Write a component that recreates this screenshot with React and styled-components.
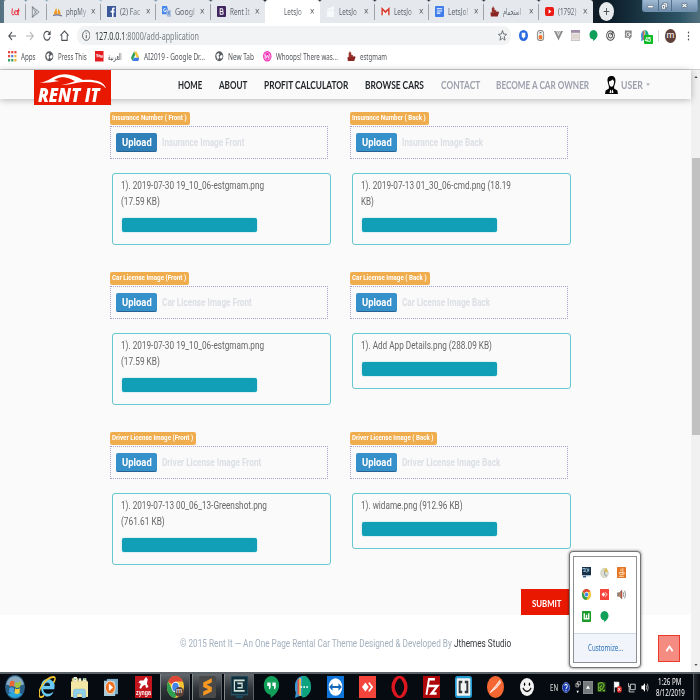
import React, { useLayoutEffect, useRef, useState } from "react";
import styled, { createGlobalStyle, css } from "styled-components";

const Global = createGlobalStyle`
  * { box-sizing: border-box; }
  body { margin: 0; width: 700px; height: 700px; overflow: hidden; background: #fff; font-family: Roboto, "Liberation Sans", sans-serif; }
  svg { display: block; flex: none; }
`;

/* ---------- condensed text ---------- */
const FitBox = styled.span`
  display: block;
  flex: none;
  white-space: nowrap;
  width: ${(p) => p.$w}px;
  margin-left: ${(p) => p.$ml || 0}px;
`;
const FitInner = styled.span`
  display: inline-block;
  transform-origin: 0 50%;
`;
function Fit({ w, ml, children }) {
  const ref = useRef(null);
  const [scale, setScale] = useState(1);
  useLayoutEffect(() => {
    if (ref.current) setScale(w / ref.current.offsetWidth);
  }, [w, children]);
  return (
    <FitBox $w={w} $ml={ml}>
      <FitInner ref={ref} style={{ transform: `scaleX(${scale})` }}>{children}</FitInner>
    </FitBox>
  );
}

/* ---------- icons, all on a 20 x 20 grid ---------- */
const chrome = (
  <>
    <circle cx="10" cy="10" r="10" fill="#f4c531" />
    <path d="M10 10 1.3 5A10 10 0 0 1 18.7 5L10 5Z" fill="#de4737" />
    <path d="M1.3 5A10 10 0 0 0 9.5 20L14 12 6 12Z" fill="#2f9e50" />
    <circle cx="10" cy="10" r="4.8" fill="#fff" />
    <circle cx="10" cy="10" r="3.8" fill="#4285e8" />
  </>
);
const hangouts = <path d="M10 0C4.500 0 1 4 1 8.500S4.500 17 9 17V20C15 17 19 13 19 8.500S15.500 0 10 0Z" fill="#10a05a" />;
const anydesk = (
  <>
    <rect width="20" height="20" fill="#f4443b" />
    <path d="M7.500 6 11.500 10 7.500 14 3.500 10Z" fill="#fff" />
    <path d="M11.500 6 15.500 10 11.500 14" fill="none" stroke="#fff" strokeWidth="1.800" />
  </>
);
const ship = (
  <>
    <path d="M1 12 19 10 20 12 17 19H2Z" fill="#8b2522" />
    <path d="M4 3H10V12H4ZM10 7 14 8V12H10ZM6 1H8V4H6Z" fill="#96332d" />
  </>
);
const globe = (
  <>
    <circle cx="10" cy="10" r="9.500" fill="#5b5f63" />
    <path d="M3 7 8 4 11 6 8 9 10 12 7 17 4 12ZM12 9 17 7 18 12 14 15 11 12Z" fill="#fff" />
  </>
);
const lens = (dark) => (
  <>
    <circle cx="10" cy="10" r="8.500" fill="none" stroke={dark} strokeWidth="2" />
    <circle cx="10" cy="10" r="4.500" fill="none" stroke={dark} strokeWidth="2" />
    <path d="M10 10 16 3" stroke={dark} strokeWidth="2" />
  </>
);
const ICONS = {
  letgo: <path d="M3 3 2 15C3 19 6 18 8 15M9 11C15 11 12 6 9 8S7 18 12 17 16 12 17 3M15 7V17H18M13 8H19" fill="none" stroke="#e8313e" strokeWidth="2.200" />,
  play: <path d="M3 1V19L18 10ZM3 1 13 14M3 19 13 6" fill="none" stroke="#7b8087" strokeWidth="1.500" />,
  pma: (
    <>
      <path d="M1 16C3 10 6 6 7 3 9 7 9 12 9 16ZM10 16C10 10 11 7 12 5 15 8 17 12 17 16Z" fill="#f09a25" />
      <path d="M0 18C5 15 13 16 20 18" stroke="#6e77a5" strokeWidth="2" fill="none" />
    </>
  ),
  facebook: (
    <>
      <rect width="20" height="20" fill="#3b5998" />
      <path d="M11 20V12H8V8.500H11V6C11 3.500 13 2.500 17 3V6C14.500 6 14.500 6 14.500 8.500H17L16.500 12H14.500V20Z" fill="#fff" />
    </>
  ),
  translate: (
    <>
      <path d="M0 0H11L16 15H0Z" fill="#4687ea" />
      <path d="M9 7H20V20H12Z" fill="#b8c8df" />
      <path d="M9 6A3 3 0 1 0 9 9H6" stroke="#fff" strokeWidth="1.500" fill="none" />
      <path d="M12 11H18M15 9V11M17 11 12 17M13 12 18 17" stroke="#4779cc" strokeWidth="1.300" />
    </>
  ),
  bootstrap: (
    <>
      <rect width="20" height="20" rx="2" fill="#41265f" />
      <path d="M7 4V16M7 5H11C14 5 14 10 11 10H7M11 10C15 10 15 15 11 15H7" fill="none" stroke="#fff" strokeWidth="2" />
    </>
  ),
  ghost: <path d="M3 6 17 2V6H3ZM3 9H17V19H3ZM7 12V17M11 11V17" fill="#f8f9fa" stroke="#f8f9fa" strokeWidth="2" />,
  gmail: (
    <>
      <path d="M1 4H19V17H1Z" fill="#f1eeee" />
      <path d="M2.500 17V5L10 11 17.500 5V17" fill="none" stroke="#d93d32" strokeWidth="3.200" />
    </>
  ),
  docs: (
    <>
      <rect width="20" height="20" rx="2" fill="#3f7cec" />
      <path d="M4 5H16M4 9H16M4 13H12" stroke="#fff" strokeWidth="2" />
    </>
  ),
  ship,
  youtube: (
    <>
      <rect y="2" width="20" height="16" rx="4" fill="#ed1b16" />
      <path d="M8 6V14L14 10Z" fill="#fff" />
    </>
  ),
  close: <path d="M3 3 17 17M17 3 3 17" stroke="#5a5e63" strokeWidth="3" />,
  plus: <path d="M10 2V18M2 10H18" stroke="#4d5156" strokeWidth="2.600" />,
  back: <path d="M20 10H3M10 2 2 10 10 18" fill="none" stroke="#4d5156" strokeWidth="2.400" />,
  forward: <path d="M0 10H17M10 2 18 10 10 18" fill="none" stroke="#b4b7ba" strokeWidth="2.400" />,
  reload: (
    <>
      <path d="M16 5A8 8 0 1 0 18 12" fill="none" stroke="#4d5156" strokeWidth="2.400" />
      <path d="M19 1V9H11Z" fill="#4d5156" />
    </>
  ),
  home: <path d="M1 10 10 2 19 10M4 9V19H16V9" fill="none" stroke="#4d5156" strokeWidth="2.200" />,
  info: (
    <>
      <circle cx="10" cy="10" r="8.800" fill="none" stroke="#54585d" strokeWidth="1.800" />
      <path d="M10 9V15M10 5V7" stroke="#54585d" strokeWidth="2.200" />
    </>
  ),
  star: <path d="M10 1 12.500 7.300 19 7.700 14 12 15.600 18.500 10 15 4.400 18.500 6 12 1 7.700 7.500 7.300Z" fill="none" stroke="#5a5e63" strokeWidth="1.700" />,
  shield: (
    <>
      <circle cx="10" cy="10" r="10" fill="#2b6ae0" />
      <path d="M6 5H14V12L10 16 6 12Z" fill="#fff" />
    </>
  ),
  pill: (
    <>
      <rect x="3" y="1" width="14" height="18" rx="6" fill="#eee" stroke="#858585" strokeWidth="2" />
      <rect x="6" y="9" width="8" height="8" rx="3" fill="#ef762a" />
      <path d="M8 5H12" stroke="#555" strokeWidth="2" />
    </>
  ),
  vue: <path d="M0 2H5L10 11 15 2H20L10 19ZM7 2H9L10 5 11 2H13L10 8Z" fill="#8d8d8d" />,
  sheet: (
    <>
      <rect x=".5" y=".5" width="19" height="19" fill="#e8e0dc" stroke="#b5abb4" />
      <rect y="0" width="20" height="5" fill="#a08ca8" />
      <path d="M3 10H17M3 14H17" stroke="#c0b5b4" />
    </>
  ),
  hangouts,
  lensDark: lens("#4d4d4d"),
  lensGray: (
    <>
      <path d="M2 1H17V12L11 18V14H2Z" fill="#858585" />
      <circle cx="9" cy="8" r="4" fill="none" stroke="#fff" strokeWidth="1.500" />
      <path d="M9 8H16" stroke="#fff" strokeWidth="1.500" />
    </>
  ),
  rainbow: (
    <>
      <path d="M10 0A10 10 0 0 0 1 15L0 20 6 18 11 19Z" fill="#3f9bd8" />
      <path d="M5 2V18" stroke="#e35b52" strokeWidth="2" />
      <path d="M8 1V19" stroke="#f2bf3a" strokeWidth="2" />
      <path d="M10 0A10 10 0 0 1 10 19Z" fill="#17a884" />
    </>
  ),
  chat: (
    <>
      <path d="M10 0A10 10 0 0 0 1 15L0 20 6 18 11 19Z" fill="#3896d2" />
      <path d="M4 3V17" stroke="#e6504b" strokeWidth="2" />
      <path d="M6 2V18" stroke="#f3c33e" strokeWidth="2" />
      <path d="M9 0A9.500 9.500 0 0 1 9 19Z" fill="#0ca27d" stroke="#13aa85" />
      <path d="M6.500 10H8M10 10H11.500M13.500 10H15" stroke="#fff" strokeWidth="1.800" />
    </>
  ),
  dots: (
    <g fill="#4d5156">
      <circle cx="10" cy="3" r="2" />
      <circle cx="10" cy="10" r="2" />
      <circle cx="10" cy="17" r="2" />
    </g>
  ),
  apps: (
    <>
      <path d="M0 2.500H5M7.500 2.500H12.500M0 10H5" stroke="#e6483c" strokeWidth="5" />
      <path d="M15 2.500H20" stroke="#e6483c" strokeWidth="5" />
      <path d="M7.500 10H12.500" stroke="#4a7de0" strokeWidth="5" />
      <path d="M15 10H20M15 17.500H20" stroke="#eeb532" strokeWidth="5" />
      <path d="M0 17.500H5M7.500 17.500H12.500" stroke="#36a260" strokeWidth="5" />
      <path d="M0 6.200H20M0 13.800H20" stroke="#fff" strokeWidth="2.800" />
    </>
  ),
  globe,
  redtag: (
    <>
      <rect width="20" height="20" fill="#e51c20" />
      <path d="M3 7H8M5 7V12M9 12V8H12V12M14 8V12H17V8" fill="none" stroke="#fff" strokeWidth="1.800" />
    </>
  ),
  drive: (
    <>
      <path d="M7 1H13L20 13H13.500Z" fill="#f6c63a" />
      <path d="M7 1 0 13 3 19 10 7Z" fill="#2b9c59" />
      <path d="M7 13H20L17 19H3.500Z" fill="#3f7be5" />
    </>
  ),
  whoops: (
    <>
      <circle cx="10" cy="10" r="10" fill="#f128b4" />
      <circle cx="10" cy="10" r="7.300" fill="none" stroke="#fff" strokeWidth="1" />
      <path d="M5 6 7 14 10 8 13 14 15 6" fill="none" stroke="#fff" strokeWidth="1.700" />
    </>
  ),
  user: (
    <>
      <path d="M4 6C3 2 6 0 10 0S17 2 16 7L14 12V14L19 16 20 20H0L1 16 6 14V12Z" fill="#050505" />
      <path d="M6 6C9 6 11 4 12 4L14 6C14 10 12 12 10 12S6 10 6 6Z" fill="#fff" />
      <path d="M8 15 10 17 12 15 13 19H7Z" fill="#fff" />
      <path d="M9.500 16H10.500V20H9.500Z" fill="#111" />
    </>
  ),
  caret: <path d="M1 6H19L10 15Z" fill="#9ca0ad" />,
  up: <path d="M3 14 10 7 17 14" fill="none" stroke="#fff" strokeWidth="3.500" />,
  arrowUp: <path d="M2 15 10 5 18 15Z" fill="#444" />,
  arrowDown: <path d="M2 5 10 15 18 5Z" fill="#555" />,
  min: <path d="M2 10H18V15H2Z" fill="#fff" stroke="#4e6278" strokeWidth="1.300" />,
  max: (
    <>
      <path d="M6 2H18V14H6Z" fill="#fff" stroke="#3f5368" strokeWidth="1.500" />
      <path d="M2 6H13V18H2Z" fill="#fff" stroke="#3f5368" strokeWidth="1.500" />
      <rect x="6" y="10" width="3" height="4" fill="#3f5368" />
    </>
  ),
  winclose: (
    <>
      <path d="M3 4 17 16M17 4 3 16" stroke="#3f5368" strokeWidth="6" />
      <path d="M4 5 16 15M16 5 4 15" stroke="#fff" strokeWidth="3.500" />
    </>
  ),
  windows: (
    <>
      <circle cx="10" cy="10" r="10" fill="#285f87" />
      <path d="M1 8A9.300 9.300 0 0 1 19 8Q10 11 1 8Z" fill="#8aa9bd" />
      <path d="M3 16A10 10 0 0 0 17 16Q10 11 3 16Z" fill="#27a6dc" />
      <path d="M5 6Q7 4 9.500 5.500L9 10Q7 8.500 4.500 10Z" fill="#ed652f" />
      <path d="M10.500 6Q13 7 16 5.500L15 10Q12 11.500 10 10Z" fill="#a3c53b" />
      <path d="M4.300 11Q7 9.500 9 11L8.500 15Q6 13.500 3.800 15Z" fill="#4a9fe0" />
      <path d="M10 11Q12 12.500 15 11L14.500 15Q12 16.500 9.500 15Z" fill="#f5ca40" />
    </>
  ),
  ie: (
    <>
      <path d="M16 12H5C5 16 12 18 17 14 15 20 4 21 2.500 12S10 1 15 4 18 9 18 12Z" fill="#68c9f5" />
      <path d="M6 9H13C13 5 7 5 6 9Z" fill="#102334" />
      <path d="M1 19C-3 12 10 0 18 1 20 2 18 5 17 6M1 19C3 20 5 18 6 18" fill="none" stroke="#f2c52f" strokeWidth="1.700" />
    </>
  ),
  explorer: (
    <>
      <path d="M1 2H8L9 4H19V19H1Z" fill="#ddc679" />
      <path d="M3 1H7V5H3ZM9 2H12V5H9ZM14 2H18V5H14Z" fill="#eef3dc" />
      <path d="M4 3H6M15 3H17" stroke="#55a85b" />
      <path d="M0 5H20V19H0Z" fill="#f4e6a4" />
      <path d="M3 20V14Q3 12 5 12H15Q17 12 17 14V20H13V16H7V20Z" fill="#8fd0eb" stroke="#6ab1d0" strokeWidth=".6" />
    </>
  ),
  wmp: (
    <>
      <path d="M4 1H20V18H4Z" fill="#76a7c3" />
      <path d="M0 3H16V20H0Z" fill="#a7cadb" />
      <circle cx="9" cy="10.500" r="7" fill="#ee7528" stroke="#fff" strokeWidth=".7" />
      <path d="M7 6.500V14.500L13 10.500Z" fill="#fff" />
    </>
  ),
  zynga: (
    <>
      <rect width="20" height="20" fill="#c1141c" />
      <path d="M6 4 10 4 13 1 15 3 14 7 16 10 13 11 12 8 9 9 7 11.500 5 11 7 7 4 6Z" fill="#fff" />
    </>
  ),
  chrome,
  sublime: (
    <>
      <rect width="20" height="20" rx="2" fill="#49494a" />
      <path d="M15 2V6L9 8 15 10V14L5 18V14L11 12 5 10V6Z" fill="#f89820" />
    </>
  ),
  escreen: (
    <>
      <rect width="20" height="17" fill="#102f3c" stroke="#2c6074" />
      <path d="M16 4H4V13.500H16M7.500 6.700H13V10.700H7.500" fill="none" stroke="#d2e2d8" strokeWidth="1.500" />
      <path d="M6 19H14" stroke="#184c60" strokeWidth="2" />
    </>
  ),
  quotes: (
    <>
      {hangouts}
      <path d="M5 6H9V10Q9 12 7 12V9H5ZM11 6H15V10Q15 12 13 12V9H11Z" fill="#fff" />
    </>
  ),
  teamviewer: (
    <>
      <rect width="20" height="20" fill="#1075d8" />
      <circle cx="10" cy="10" r="8" fill="#fff" />
      <path d="M2.500 10 6.500 6.500V9H13.500V6.500L17.500 10 13.500 13.500V11H6.500V13.500Z" fill="#1469bd" />
    </>
  ),
  anydesk,
  opera: (
    <>
      <ellipse cx="10" cy="10" rx="7.500" ry="8.200" fill="none" stroke="#dc1720" strokeWidth="4" />
      <ellipse cx="10" cy="10" rx="4.300" ry="8" fill="#090d12" />
    </>
  ),
  filezilla: (
    <>
      <rect width="20" height="20" fill="#ad0709" />
      <path d="M4 17 7 3H14M5.500 9H12M11 9H17L10 16H16" fill="none" stroke="#fff" strokeWidth="2.300" />
    </>
  ),
  brackets: (
    <>
      <rect x="1" y="1" width="18" height="18" rx="2" fill="#f2f3f3" stroke="#229bd2" strokeWidth="2" />
      <path d="M8.500 5.500H5.500V14.500H8.500M11.500 5.500H14.500V14.500H11.500" fill="none" stroke="#33383c" strokeWidth="2.300" />
    </>
  ),
  postman: (
    <>
      <circle cx="10" cy="10" r="10" fill="#f46732" />
      <path d="M4 15 10 9 15 4 16 6 11 11ZM4 15 9 10" fill="#f9c9b6" stroke="#fff" strokeWidth=".7" />
    </>
  ),
  smile: (
    <>
      <circle cx="10" cy="10" r="10" fill="#f2f2f2" />
      <ellipse cx="6.500" cy="7" rx="1" ry="2" />
      <ellipse cx="13.500" cy="7" rx="1" ry="2" />
      <path d="M4 11Q10 19 16 11" fill="none" stroke="#111" strokeWidth="1.400" />
    </>
  ),
  help: (
    <>
      <circle cx="10" cy="10" r="9" fill="#1738ad" stroke="#8eabe9" strokeWidth="1.500" />
      <path d="M7 7C7 3 14 4 13 8 13 10 10 10 10 13M10 14.500V17" fill="none" stroke="#fff" strokeWidth="2.200" />
    </>
  ),
  restore: (
    <>
      <path d="M8 1H18V6H8ZM3 4H12V9H3Z" fill="#111" stroke="#d7d7d7" strokeWidth="1.500" />
      <path d="M5 15H13L9 19Z" fill="#fff" />
    </>
  ),
  trayup: (
    <>
      <rect x=".5" y=".5" width="19" height="19" fill="#767a7d" stroke="#a5a8aa" />
      <path d="M6 12 10 7 14 12Z" fill="#fff" />
    </>
  ),
  nvidia: (
    <>
      <path d="M1 2H19V18H1Z" fill="#294719" />
      <path d="M3 16V5Q12 0 16 7L12 13Q9 16 6 11L11 7M3 16H9M13 16H18" fill="none" stroke="#71bd31" strokeWidth="2" />
    </>
  ),
  flag: (
    <>
      <path d="M3 1V19M3 2H13V10H3" fill="#fff" stroke="#fff" strokeWidth="1.500" />
      <circle cx="14" cy="14" r="5.500" fill="#da2c27" />
      <path d="M11.500 11.500 16.500 16.500M16.500 11.500 11.500 16.500" stroke="#fff" strokeWidth="1.500" />
    </>
  ),
  network: <path d="M6 4H18V14H6ZM8 18H16M1 2V8H5M3 8V18H8" fill="none" stroke="#e4e4e4" strokeWidth="1.800" />,
  sound: (
    <>
      <path d="M1 7H5L10 2V18L5 13H1Z" fill="#fff" />
      <path d="M13 6Q15 10 13 14M16 3Q20 10 16 17" fill="none" stroke="#ddd" strokeWidth="1.500" />
    </>
  ),
  monitor: (
    <>
      <rect width="20" height="15" fill="#173047" />
      <path d="M1 3H7V8H3M10 2 16 8M16 3 10 10M7 16H18" stroke="#8fbad1" strokeWidth="2" fill="none" />
      <path d="M2 16H9V19H2Z" fill="#34577a" />
    </>
  ),
  clockface: (
    <>
      <circle cx="10" cy="11" r="8.500" fill="#dedfd0" stroke="#b7b7a2" />
      <path d="M5 1 9 5 14 1 18 8 12 10Z" fill="#ddc05d" />
      <path d="M10 7V13L15 17" fill="none" stroke="#91a1ac" strokeWidth="2" />
    </>
  ),
  java: (
    <>
      <rect width="20" height="20" rx="1" fill="#e67825" />
      <path d="M9 3V8M13 2V9M5 10H14L12 14H7ZM4 17H15M14 11H17L14 14" fill="none" stroke="#fff1db" strokeWidth="1.500" />
    </>
  ),
  speaker: (
    <>
      <path d="M1 7H5L11 2V18L5 13H1Z" fill="#a78370" stroke="#6b5c55" />
      <path d="M10 4V16" stroke="#d14532" strokeWidth="2" />
      <path d="M14 6Q16 10 14 14M17 3Q21 10 17 17" fill="none" stroke="#777" strokeWidth="1.600" />
    </>
  ),
  greenbox: (
    <>
      <rect width="20" height="20" rx="2" fill="#1a9b2c" />
      <path d="M5 4V14H15V4M10 7V14" fill="none" stroke="#fff" strokeWidth="3" />
    </>
  ),
};
const Svg = styled.svg`
  width: ${(p) => p.$w}px;
  height: ${(p) => p.$h}px;
`;
const Icon = ({ n, w = 9, h = 12 }) => (
  <Svg viewBox="0 0 20 20" preserveAspectRatio="none" $w={w} $h={h}>{ICONS[n]}</Svg>
);
const Slot = styled.div`
  flex: none;
  display: flex;
  align-items: center;
  justify-content: center;
  width: ${(p) => p.$w}px;
  height: 100%;
  margin-left: ${(p) => p.$ml || 0}px;
`;

/* ---------- browser chrome ---------- */
const Screen = styled.div`
  position: relative;
  width: 700px;
  height: 700px;
  display: flex;
  flex-direction: column;
  overflow: hidden;
`;
const TabStrip = styled.div`
  height: 23px;
  flex: none;
  display: flex;
  background: linear-gradient(90deg, #557080 0, #a8cfe3 80px, #698ba3 160px, #17222c 240px, #111b26 590px, #0c1d2a 610px, #2c5566 680px, #53717e 700px);
`;
const tabFace = css`
  background: ${(p) => (p.$active ? "#fff" : "#e5e8ec")};
  border-radius: ${(p) => (p.$active ? "3px 3px 0 0" : "2px 3px 0 0")};
`;
const Pinned = styled.div`
  ${tabFace}
  width: ${(p) => p.$w}px;
  flex: none;
  margin-left: ${(p) => p.$ml || 0}px;
  padding-left: ${(p) => p.$pl}px;
  display: flex;
  align-items: center;
`;
const Tab = styled.div`
  ${tabFace}
  width: 54.7px;
  flex: none;
  display: flex;
  align-items: center;
  padding-left: 6px;
  font: 9.500px "Noto Sans", "DejaVu Sans", sans-serif;
  color: #5f646b;
`;
const TabTitle = styled.div`
  width: 21px;
  margin-left: 4px;
  overflow: hidden;
  mask-image: linear-gradient(90deg, #000 60%, #0006);
`;
const TabClose = styled.div`
  margin-left: 4.500px;
`;
const Divider = styled.div`
  width: 1px;
  height: 16px;
  margin-left: auto;
  background: ${(p) => (p.$hide ? "transparent" : "#9fa3a8")};
`;
const NewTab = styled.div`
  width: 15px;
  height: 19px;
  margin: 2px 0 0 5.500px;
  border-radius: 50%;
  background: #e8ebee;
  display: flex;
  align-items: center;
  justify-content: center;
`;
const WindowButtons = styled.div`
  display: flex;
  height: 12px;
  width: 56px;
  margin-left: auto;
  margin-right: 2px;
  border: 1px solid #6d91af;
  border-top: 0;
  border-radius: 0 0 3px 3px;
  background: linear-gradient(#a1bad3, #718eac);
`;
const WinButton = styled.div`
  width: ${(p) => p.$w}px;
  border-right: ${(p) => (p.$last ? 0 : "1px solid #54708b")};
  display: flex;
  align-items: center;
  justify-content: center;
`;
const Toolbar = styled.div`
  height: 25px;
  flex: none;
  background: #fff;
  display: flex;
  align-items: center;
  padding-left: 3px;
`;
const Address = styled.div`
  width: 434px;
  height: 19px;
  margin-left: 3.500px;
  padding: 0 4.500px;
  border-radius: 7px / 10px;
  background: #f1f3f4;
  display: flex;
  align-items: center;
  justify-content: space-between;
  font: 10.500px "Noto Sans", sans-serif;
  color: #7a7e82;
`;
const AddressLeft = styled.div`
  display: flex;
  align-items: center;
`;
const Host = styled.span`
  color: #35383b;
`;
const Extensions = styled.div`
  display: flex;
  align-items: center;
  height: 100%;
  margin-left: 3.500px;
`;
const ExtWithBadge = styled.div`
  position: relative;
`;
const Badge = styled.div`
  position: absolute;
  left: 3px;
  top: 5px;
  width: 9px;
  height: 9px;
  border-radius: 1px;
  background: #0abb22;
  color: #fff;
  font: bold 7px/9px "Liberation Sans", sans-serif;
  padding-left: 1px;
`;
const ToolDivider = styled.div`
  width: 1px;
  height: 12px;
  margin: 0 6px 0 3.500px;
  background: #d5d7da;
`;
const Avatar = styled.div`
  width: 11px;
  height: 14px;
  border-radius: 50%;
  background: #5d4037;
  color: #fff;
  font: 9px/12px Roboto, sans-serif;
  text-align: center;
`;
const Bookmarks = styled.div`
  height: 22px;
  flex: none;
  display: flex;
  align-items: center;
  padding: 0 0 4px 8px;
  background: #fff;
  border-bottom: 1px solid #d0d0d0;
  font: 9px "Noto Sans", "DejaVu Sans", sans-serif;
  color: #505459;
`;

/* ---------- site ---------- */
const Viewport = styled.div`
  height: 602px;
  flex: none;
  display: flex;
`;
const Site = styled.div`
  width: 691px;
  display: flex;
  flex-direction: column;
`;
const Header = styled.header`
  position: relative;
  height: 29px;
  flex: none;
  display: flex;
  align-items: flex-start;
  padding-left: 34px;
  background: #fafafa;
  box-shadow: 0 1px 7px rgba(0, 0, 0, 0.28);
`;
const Logo = styled.div`
  width: 76.500px;
  height: 34.500px;
  background: #e91800;
  display: flex;
  flex-direction: column;
  padding: 4px 0 0 4px;
  color: #fff;
`;
const LogoText = styled.div`
  font: italic 800 19px/18px "Open Sans", sans-serif;
  height: 18px;
  margin-top: -2.500px;
`;
const Nav = styled.nav`
  display: flex;
  align-items: center;
  height: 29px;
  font: 700 10.500px Lato, sans-serif;
  color: #23272c;
`;
const NavMuted = styled.div`
  display: flex;
  align-items: center;
  color: #9da1ae;
`;
const Main = styled.main`
  height: 515.500px;
  flex: none;
  padding: 13px 0 0 110px;
  background: #fafafa;
`;
const Fields = styled.div`
  display: grid;
  grid-template-columns: 240px 240px;
  grid-auto-rows: 160px;
`;
const Field = styled.section`
  display: flex;
  flex-direction: column;
  align-items: flex-start;
`;
const Tag = styled.div`
  height: 13px;
  padding: 0 2.800px;
  margin-left: -0.500px;
  border-radius: 2px;
  background: #f0ad4e;
  color: #fff;
  font: 700 7px/13px Roboto, sans-serif;
`;
const DropZone = styled.div`
  width: 218px;
  height: 33px;
  margin-top: 1px;
  border: 1px dotted #aaa3cc;
  display: flex;
  align-items: center;
  padding-left: 5px;
  font: 700 10.500px Roboto, sans-serif;
  color: #dcdfe4;
`;
const UploadButton = styled.button`
  width: 40.500px;
  height: 19px;
  padding: 0 0 0 5.500px;
  border: 0;
  border-bottom: 1px solid #286090;
  border-radius: 2px;
  background: ${(p) => (p.$hover ? "#2f80b8" : "#3690ca")};
  color: #fff;
  font: 700 11px/19px Roboto, sans-serif;
  text-align: left;
`;
const FileCard = styled.div`
  width: 218.500px;
  margin: 13.500px 0 0 2px;
  padding: 4px 0 12px 8px;
  border: 1px solid #65c7d2;
  border-radius: 3px;
  font: 10.500px/16px Roboto, sans-serif;
  color: #666;
`;
const Progress = styled.div`
  width: 135px;
  height: 14px;
  margin: 8px 0 0 0.500px;
  border-radius: 2px;
  background: #119fb7;
  box-shadow: 0 0 1.500px #73cbd5;
`;
const Submit = styled.button`
  display: block;
  width: 69px;
  height: 26px;
  margin: -3px 0 0 410.500px;
  padding: 2px 0 0 11px;
  border: 0;
  background: #e91800;
  color: #fff;
  font: 700 9.500px Lato, sans-serif;
  text-align: left;
`;
const Footer = styled.footer`
  flex: 1;
  display: flex;
  align-items: center;
  padding-left: 180px;
  background: #fff;
  font: 10.500px Roboto, sans-serif;
  color: #a3b1bf;
`;
const Author = styled.span`
  color: #36393c;
`;
const ScrollBar = styled.div`
  width: 9px;
  background: #f1f1f1;
  display: flex;
  flex-direction: column;
  align-items: center;
  padding: 5px 0;
`;
const Thumb = styled.div`
  width: 8px;
  height: 277px;
  margin: 79px 0 auto;
  background: #c1c1c1;
`;
const ToTop = styled.div`
  position: absolute;
  left: 658px;
  top: 635px;
  width: 22px;
  height: 27px;
  border: 1px solid #ea3a2c;
  background: #f48c82;
  display: flex;
  align-items: center;
  justify-content: center;
`;

/* ---------- desktop ---------- */
const TrayPopup = styled.div`
  position: absolute;
  left: 569px;
  top: 551px;
  width: 72px;
  height: 117px;
  padding: 4px 3px;
  border: 1px solid #747474;
  border-radius: 4px;
  background: #fff;
  box-shadow: 0 0 3px rgba(0, 0, 0, 0.6);
`;
const TrayInner = styled.div`
  height: 100%;
  border: 1px solid #8e9092;
  display: flex;
  flex-direction: column;
`;
const TrayIcons = styled.div`
  flex: 1;
  display: grid;
  grid-template-columns: repeat(3, 17.500px);
  grid-template-rows: repeat(3, 21.700px);
  justify-content: center;
  align-items: center;
  justify-items: center;
  padding: 5px 1.500px 0 0;
`;
const TrayFoot = styled.div`
  height: 29px;
  border-top: 1px solid #cfd9e8;
  background: #f1f5fb;
  color: #2c70b9;
  font: 9px/27px "Noto Sans", sans-serif;
`;
const Taskbar = styled.div`
  height: 28px;
  flex: none;
  display: flex;
  align-items: center;
  border-top: 2px solid #5b6369;
  background: #060b11;
`;
const AppSlot = styled.div`
  width: 32px;
  height: 26px;
  flex: none;
  display: flex;
  align-items: center;
  justify-content: center;
  ${(p) =>
    p.$open &&
    css`
      width: 30px;
      margin: 0 1px;
      border-left: 1px solid #83888b;
      border-right: 1px solid #5e6366;
      background: linear-gradient(#62676b, #30353a 55%, #202529);
    `}
`;
const StartSlot = styled(AppSlot)`
  margin-left: -1px;
`;
const IconStack = styled.div`
  position: relative;
`;
const Profile = styled(Avatar)`
  position: absolute;
  left: 8px;
  top: 11px;
  width: 9px;
  height: 10px;
  font-size: 7px;
  line-height: 9px;
`;
const ZyngaLabel = styled.div`
  position: absolute;
  left: 1px;
  top: 13px;
  color: #fff;
  font: 700 7px/7px "Liberation Sans", sans-serif;
`;
const Language = styled.div`
  margin-left: 6.500px;
  font: 8.500px "Noto Sans", sans-serif;
  color: #e0e0e0;
`;
const Clock = styled.div`
  width: 30px;
  margin-left: 6px;
  display: flex;
  flex-direction: column;
  align-items: center;
  color: #fff;
  font: 9px/11.500px "Noto Sans", sans-serif;
`;
const ShowDesktop = styled.div`
  width: 7px;
  height: 26px;
  margin-left: auto;
  border-left: 1px solid #4d5357;
  background: linear-gradient(90deg, #20262b, #090d11);
`;

const TABS = [
  ["pma", "phpMy", 20],
  ["facebook", "(2) Fac", 20],
  ["translate", "Googl", 20],
  ["bootstrap", "Rent It", 20],
  [null, "LetsJo", 18],
  ["ghost", "LetsJo", 18],
  ["gmail", "LetsJo", 18],
  ["docs", "LetsJo!", 20],
  ["ship", "استجمام", 18],
  ["youtube", "(1792)", 18],
];
const BOOKMARKS = [
  ["apps", "Apps", 14.5, 0],
  ["globe", "Press This", 28.5, 9.5],
  ["redtag", "العربية", 14, 8.5],
  ["drive", "AI2019 - Google Dr...", 61, 8.5],
  ["globe", "New Tab", 26, 10.5],
  ["whoops", "Whoops! There was...", 62, 9],
  ["ship", "estgmam", 27, 9],
];
const FIELDS = [
  ["Insurance Number ( Front )", 75, "Insurance Image Front", 82.5, [["1). 2019-07-30 19_10_06-estgmam.png", 143], ["(17.59 KB)", 38.5]]],
  ["Insurance Number ( Back )", 74, "Insurance Image Back", 81.5, [["1). 2019-07-13 01_30_06-cmd.png (18.19", 150], ["KB)", 13]]],
  ["Car License Image (Front )", 74, "Car License Image Front", 90, [["1). 2019-07-30 19_10_06-estgmam.png", 143], ["(17.59 KB)", 38.5]]],
  ["Car License Image ( Back )", 74.5, "Car License Image Back", 88.5, [["1). Add App Details.png (288.09 KB)", 131]]],
  ["Driver License Image (Front )", 81, "Driver License Image Front", 99.5, [["1). 2019-07-13 00_06_13-Greenshot.png", 146], ["(761.61 KB)", 43.5]]],
  ["Driver License Image ( Back )", 81.5, "Driver License Image Back", 98, [["1). widame.png (912.96 KB)", 101.5]]],
];
const APPS = ["ie", "explorer", "wmp", "zynga", "chrome", "sublime", "escreen", "quotes", "chat", "teamviewer", "anydesk", "opera", "filezilla", "brackets", "postman", "smile"];
const OPEN = ["chrome", "sublime", "escreen"];
const EXTENSIONS = ["shield", "pill", "vue", "sheet", "hangouts", "lensDark", "lensGray"];

export default function App() {
  return (
    <>
      <Global />
      <Screen>
        <TabStrip>
          <Pinned $w={22} $ml={4} $pl={6.5}><Icon n="letgo" w={9} h={9} /><Divider /></Pinned>
          <Pinned $w={20.5} $pl={4.5}><Icon n="play" w={9} h={12} /><Divider /></Pinned>
          {TABS.map(([icon, title, w], i) => (
            <Tab key={i} $active={i === 4}>
              <Slot $w={9}>{icon && <Icon n={icon} w={9} h={11} />}</Slot>
              <TabTitle><Fit w={w}>{title}</Fit></TabTitle>
              <TabClose><Icon n="close" w={4.5} h={6.5} /></TabClose>
              <Divider $hide={i === 3 || i === 4 || i === 9} />
            </Tab>
          ))}
          <NewTab><Icon n="plus" w={7} h={9} /></NewTab>
          <WindowButtons>
            <WinButton $w={16}><Icon n="min" w={7} h={9} /></WinButton>
            <WinButton $w={13}><Icon n="max" w={7} h={8} /></WinButton>
            <WinButton $w={26} $last><Icon n="winclose" w={7} h={7} /></WinButton>
          </WindowButtons>
        </TabStrip>

        <Toolbar>
          <Slot $w={17.5}><Icon n="back" w={8} h={10} /></Slot>
          <Slot $w={18}><Icon n="forward" w={8} h={10} /></Slot>
          <Slot $w={17.5}><Icon n="reload" w={8} h={11} /></Slot>
          <Slot $w={17.5}><Icon n="home" w={9} h={11} /></Slot>
          <Address>
            <AddressLeft>
              <Icon n="info" w={8.5} h={11} />
              <Fit w={104} ml={5}><Host>127.0.0.1</Host>:8000/add-application</Fit>
            </AddressLeft>
            <Icon n="star" w={9} h={11} />
          </Address>
          <Extensions>
            {EXTENSIONS.map((n) => <Slot key={n} $w={17.5}><Icon n={n} w={9} h={11} /></Slot>)}
            <Slot $w={17.5}><ExtWithBadge><Icon n="rainbow" w={9} h={11} /><Badge><Fit w={6}>45</Fit></Badge></ExtWithBadge></Slot>
            <ToolDivider />
            <Avatar>m</Avatar>
            <Slot $w={10} $ml={7}><Icon n="dots" w={7} h={10} /></Slot>
          </Extensions>
        </Toolbar>

        <Bookmarks>
          {BOOKMARKS.map(([icon, label, w, ml], i) => (
            <React.Fragment key={i}>
              <Slot $w={8.5} $ml={ml}><Icon n={icon} w={8.5} h={10.5} /></Slot>
              <Fit w={w} ml={4.5}>{label}</Fit>
            </React.Fragment>
          ))}
        </Bookmarks>

        <Viewport>
          <Site>
            <Header>
              <Logo>
                <svg width="70" height="14" viewBox="0 0 70 14">
                  <path d="M1 9C10 8 13 3 21 1 29-1 36 1 45 6 55 5 67 7 68 15 64 8 54 8 45 8 38 8 35 11 23 11 31 10 34 8 37 7 28 3 23 2 16 6L22 7C14 8 9 9 1 9Z" fill="#fff" />
                  <path d="M17 6C22 2 29 3 34 6L23 7Z" fill="#e91800" />
                </svg>
                <LogoText><Fit w={62}>RENT IT</Fit></LogoText>
              </Logo>
              <Nav>
                <Fit w={24.5} ml={67.5}>HOME</Fit>
                <Fit w={28.5} ml={16.5}>ABOUT</Fit>
                <Fit w={84.5} ml={16.5}>PROFIT CALCULATOR</Fit>
                <Fit w={59} ml={16.5}>BROWSE CARS</Fit>
                <NavMuted>
                  <Fit w={39} ml={16.5}>CONTACT</Fit>
                  <Fit w={93.5} ml={16}>BECOME A CAR OWNER</Fit>
                  <Slot $w={13} $ml={16}><Icon n="user" w={13} h={18} /></Slot>
                  <Fit w={21.5} ml={2.5}>USER</Fit>
                  <Slot $w={4} $ml={3.5}><Icon n="caret" w={4} h={5} /></Slot>
                </NavMuted>
              </Nav>
            </Header>
            <Main>
              <Fields>
                {FIELDS.map(([tag, tagW, hint, hintW, lines], i) => (
                  <Field key={i}>
                    <Tag><Fit w={tagW}>{tag}</Fit></Tag>
                    <DropZone>
                      <UploadButton $hover={i === 0}><Fit w={30}>Upload</Fit></UploadButton>
                      <Fit w={hintW} ml={5.5}>{hint}</Fit>
                    </DropZone>
                    <FileCard>
                      {lines.map(([text, w]) => <Fit key={text} w={w}>{text}</Fit>)}
                      <Progress />
                    </FileCard>
                  </Field>
                ))}
              </Fields>
              <Submit><Fit w={29.5}>SUBMIT</Fit></Submit>
            </Main>
            <Footer>
              <Fit w={331}>© 2015 Rent It — An One Page Rental Car Theme Designed &amp; Developed By <Author>Jthemes Studio</Author></Fit>
            </Footer>
          </Site>
          <ScrollBar>
            <Icon n="arrowUp" w={4} h={4} />
            <Thumb />
            <Icon n="arrowDown" w={4} h={4} />
          </ScrollBar>
        </Viewport>

        <Taskbar>
          <StartSlot><Icon n="windows" w={20} h={24} /></StartSlot>
          {APPS.map((n) => (
            <AppSlot key={n} $open={OPEN.includes(n)}>
              <IconStack>
                <Icon n={n} w={n === "wmp" || n === "smile" ? 14 : 17} h={n === "wmp" || n === "smile" ? 18 : 22} />
                {n === "chrome" && <Profile>m</Profile>}
                {n === "zynga" && <ZyngaLabel><Fit w={15}>zynga</Fit></ZyngaLabel>}
              </IconStack>
            </AppSlot>
          ))}
          <Language><Fit w={8}>EN</Fit></Language>
          <Slot $w={8} $ml={4.5}><Icon n="help" w={8} h={11} /></Slot>
          <Slot $w={7} $ml={4}><Icon n="restore" w={6} h={13} /></Slot>
          <Slot $w={10} $ml={2}><Icon n="trayup" w={10} h={13} /></Slot>
          <Slot $w={9} $ml={4}><Icon n="nvidia" w={9} h={12} /></Slot>
          <Slot $w={9} $ml={7}><Icon n="flag" w={9} h={12} /></Slot>
          <Slot $w={9} $ml={5}><Icon n="network" w={8} h={11} /></Slot>
          <Slot $w={9} $ml={4}><Icon n="sound" w={8} h={11} /></Slot>
          <Clock><Fit w={23.5}>1:26 PM</Fit><Fit w={29}>8/12/2019</Fit></Clock>
          <ShowDesktop />
        </Taskbar>

        <ToTop><Icon n="up" w={9} h={13} /></ToTop>
        <TrayPopup>
          <TrayInner>
            <TrayIcons>
              {["monitor", "clockface", "java", "chrome", "anydesk", "speaker", "greenbox", "hangouts"].map((n) => (
                <Icon key={n} n={n} w={9} h={11} />
              ))}
            </TrayIcons>
            <TrayFoot><Fit w={35.5} ml={13.5}>Customize...</Fit></TrayFoot>
          </TrayInner>
        </TrayPopup>
      </Screen>
    </>
  );
}
